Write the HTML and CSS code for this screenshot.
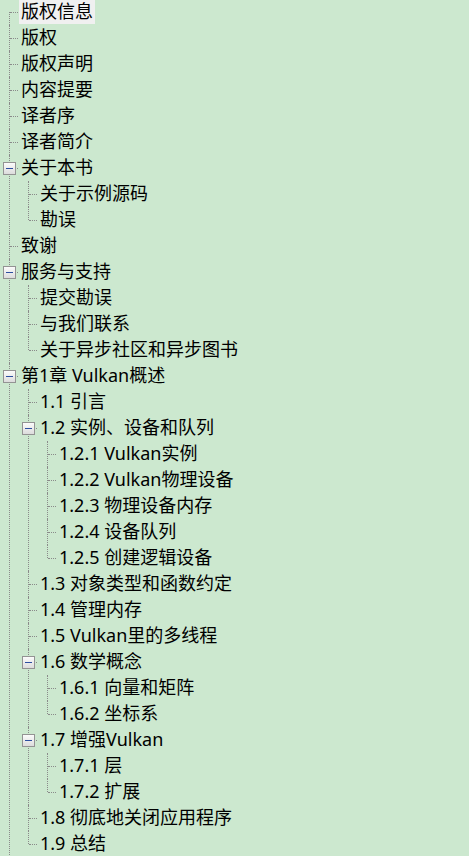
FILE: index.html
```html
<!DOCTYPE html>
<html lang="zh-CN">
<head>
<meta charset="utf-8">
<title>目录</title>
<link rel="stylesheet" href="styles.css">
</head>
<body>
<ul class="tree">
  <li class="first"><div class="row"><span class="label selected">版权信息</span></div></li>
  <li><div class="row"><span class="label">版权</span></div></li>
  <li><div class="row"><span class="label">版权声明</span></div></li>
  <li><div class="row"><span class="label">内容提要</span></div></li>
  <li><div class="row"><span class="label">译者序</span></div></li>
  <li><div class="row"><span class="label">译者简介</span></div></li>
  <li><div class="row"><span class="exp"></span><span class="label">关于本书</span></div>
    <ul>
      <li><div class="row"><span class="label">关于示例源码</span></div></li>
      <li class="last"><div class="row"><span class="label">勘误</span></div></li>
    </ul>
  </li>
  <li><div class="row"><span class="label">致谢</span></div></li>
  <li><div class="row"><span class="exp"></span><span class="label">服务与支持</span></div>
    <ul>
      <li><div class="row"><span class="label">提交勘误</span></div></li>
      <li><div class="row"><span class="label">与我们联系</span></div></li>
      <li class="last"><div class="row"><span class="label">关于异步社区和异步图书</span></div></li>
    </ul>
  </li>
  <li class="more"><div class="row"><span class="exp"></span><span class="label">第1章 Vulkan概述</span></div>
    <ul>
      <li><div class="row"><span class="label">1.1 引言</span></div></li>
      <li><div class="row"><span class="exp"></span><span class="label">1.2 实例、设备和队列</span></div>
        <ul>
          <li><div class="row"><span class="label">1.2.1 Vulkan实例</span></div></li>
          <li><div class="row"><span class="label">1.2.2 Vulkan物理设备</span></div></li>
          <li><div class="row"><span class="label">1.2.3 物理设备内存</span></div></li>
          <li><div class="row"><span class="label">1.2.4 设备队列</span></div></li>
          <li class="last"><div class="row"><span class="label">1.2.5 创建逻辑设备</span></div></li>
        </ul>
      </li>
      <li><div class="row"><span class="label">1.3 对象类型和函数约定</span></div></li>
      <li><div class="row"><span class="label">1.4 管理内存</span></div></li>
      <li><div class="row"><span class="label">1.5 Vulkan里的多线程</span></div></li>
      <li><div class="row"><span class="exp"></span><span class="label">1.6 数学概念</span></div>
        <ul>
          <li><div class="row"><span class="label">1.6.1 向量和矩阵</span></div></li>
          <li class="last"><div class="row"><span class="label">1.6.2 坐标系</span></div></li>
        </ul>
      </li>
      <li><div class="row"><span class="exp"></span><span class="label">1.7 增强Vulkan</span></div>
        <ul>
          <li><div class="row"><span class="label">1.7.1 层</span></div></li>
          <li class="last"><div class="row"><span class="label">1.7.2 扩展</span></div></li>
        </ul>
      </li>
      <li><div class="row"><span class="label">1.8 彻底地关闭应用程序</span></div></li>
      <li class="last"><div class="row"><span class="label">1.9 总结</span></div></li>
    </ul>
  </li>
</ul>
</body>
</html>
```
FILE: styles.css
```css
html, body {
  margin: 0;
  padding: 0;
  background: #cce8cf;
  overflow: hidden;
  height: 856px;
}
body {
  font-family: "Noto Sans", "Noto Sans CJK SC", sans-serif;
  font-size: 18px;
  color: #000;
}
.tree, .tree ul {
  list-style: none;
  margin: 0;
  padding: 0;
}
.tree {
  margin-top: -1px;
}
.tree ul {
  padding-left: 19px;
}
.tree li {
  position: relative;
}
.tree li::before {
  content: "";
  position: absolute;
  left: 9px;
  top: 0;
  bottom: 0;
  border-left: 1px dotted #8a8a8a;
}
.tree li.first::before {
  top: 13px;
}
.tree li.last::before {
  bottom: auto;
  height: 13px;
}
.tree li.more::before {
  bottom: -20px;
}
.row {
  position: relative;
  height: 26px;
  display: flex;
  align-items: center;
  padding-left: 19px;
}
.row::before {
  content: "";
  position: absolute;
  left: 10px;
  top: 13px;
  width: 8px;
  border-top: 1px dotted #8a8a8a;
}
.label {
  display: block;
  height: 24px;
  line-height: 23px;
  padding: 0 2px;
  white-space: nowrap;
}
.selected {
  background: #f0f0f0;
}
.exp {
  position: absolute;
  left: 3px;
  top: 7px;
  width: 11px;
  height: 11px;
  border: 1px solid #939393;
  background: linear-gradient(#fbfbfb, #dcdcdc);
  z-index: 1;
}
.exp::after {
  content: "";
  position: absolute;
  left: 2px;
  top: 5px;
  width: 7px;
  height: 1px;
  background: #2c4fa0;
}
```
